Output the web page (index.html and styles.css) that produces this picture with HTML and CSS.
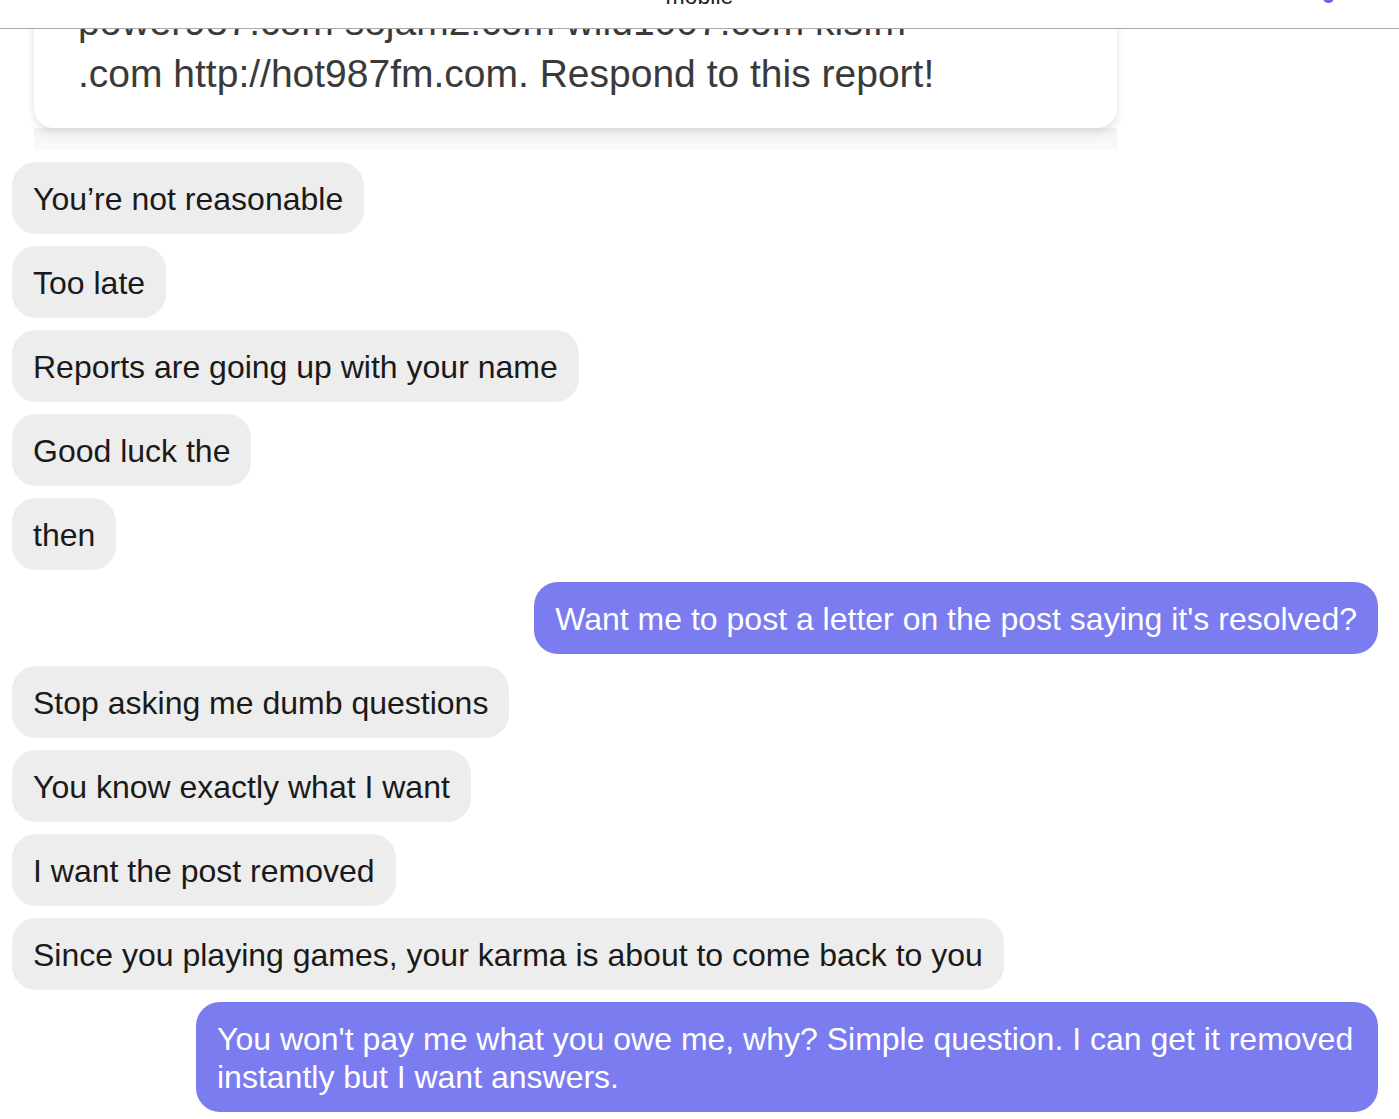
FILE: index.html
```html
<!DOCTYPE html>
<html lang="en">
<head>
  <meta charset="UTF-8" />
  <meta name="viewport" content="width=device-width, initial-scale=1.0"/>
  <title>Messages - mobile</title>
  <link rel="stylesheet" href="styles.css">
</head>
<body>
  <!-- Top bar (scrolled, overlays the thread) -->
  <div class="top-bar">
    <span class="top-title">mobile</span>
    <span class="top-dot"></span>
  </div>

  <div class="thread">
    <!-- Shared report card -->
    <div class="report-wrap">
      <div class="report-card">
        <p>power987.com sojam2.com wild1007.com kisfm</p>
        <p>.com http://hot987fm.com. Respond to this report!</p>
      </div>
      <div class="report-shade"></div>
    </div>

    <div class="msg in">You’re not reasonable</div>
    <div class="msg in">Too late</div>
    <div class="msg in">Reports are going up with your name</div>
    <div class="msg in">Good luck the</div>
    <div class="msg in">then</div>
    <div class="msg out">Want me to post a letter on the post saying it's resolved?</div>
    <div class="msg in">Stop asking me dumb questions</div>
    <div class="msg in">You know exactly what I want</div>
    <div class="msg in">I want the post removed</div>
    <div class="msg in">Since you playing games, your karma is about to come back to you</div>
    <div class="msg out">You won't pay me what you owe me, why? Simple question. I can get it removed instantly but I want answers.</div>
  </div>
</body>
</html>
```

FILE: styles.css
```css
/* Page */
body {
  margin: 0;
  background: #ffffff;
  font-family: 'Liberation Sans', Arial, sans-serif;
  color: #1c1c1c;
  overflow: hidden;
}

/* Header strip at the very top */
.top-bar {
  position: absolute;
  top: 0;
  left: 0;
  right: 0;
  height: 28px;
  background: #ffffff;
  border-bottom: 1px solid #a9a9a9;
  z-index: 5;
  overflow: hidden;
}

.top-title {
  position: absolute;
  left: 0;
  right: 0;
  top: -17px;
  text-align: center;
  font-size: 23px;
  color: #222;
}

.top-dot {
  position: absolute;
  top: -8px;
  left: 1323px;
  width: 11px;
  height: 11px;
  border-radius: 50%;
  background: #6a63e8;
}

/* Message list */
.thread {
  display: flex;
  flex-direction: column;
  gap: 12px;
  padding: 0 21px 0 12px;
}

.report-wrap {
  margin: -39px 261px 0 22px;
}

.report-card {
  background: #fff;
  border-radius: 0 0 20px 20px;
  padding: 35px 44px 28px;
  box-shadow: 0 3px 8px rgba(0, 0, 0, 0.13);
  position: relative;
}

.report-card p {
  margin: 0;
  font-size: 39px;
  line-height: 52px;
  color: #3a3a3a;
  white-space: nowrap;
}

.report-shade {
  height: 22px;
  background: linear-gradient(#f2f2f2, #fafafa);
}

.msg {
  font-size: 32px;
  line-height: 38px;
  padding: 18px 21px 16px;
  border-radius: 24px;
  max-width: 1140px;
}

.msg.in {
  align-self: flex-start;
  background: #ededed;
  color: #1a1a1a;
}

.msg.out {
  align-self: flex-end;
  background: #7b7cf0;
  color: #ffffff;
}
```
